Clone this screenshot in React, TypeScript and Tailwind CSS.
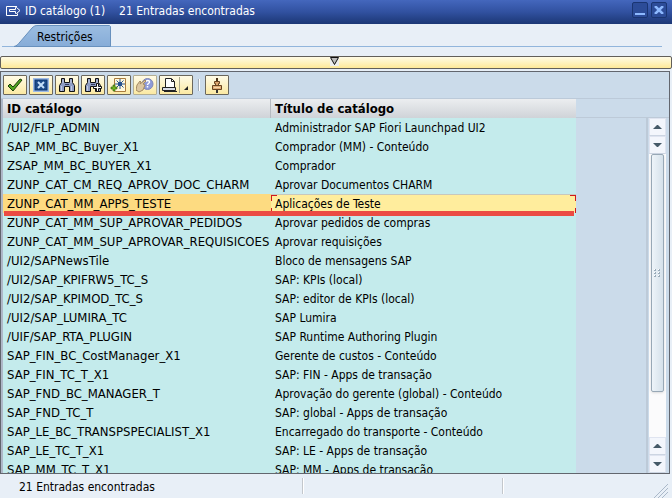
import React from "react";

const entries: [string, string][] = [
  ["/UI2/FLP_ADMIN", "Administrador SAP Fiori Launchpad UI2"],
  ["SAP_MM_BC_Buyer_X1", "Comprador (MM) - Conteúdo"],
  ["ZSAP_MM_BC_BUYER_X1", "Comprador"],
  ["ZUNP_CAT_CM_REQ_APROV_DOC_CHARM", "Aprovar Documentos CHARM"],
  ["ZUNP_CAT_MM_APPS_TESTE", "Aplicações de Teste"],
  ["ZUNP_CAT_MM_SUP_APROVAR_PEDIDOS", "Aprovar pedidos de compras"],
  ["ZUNP_CAT_MM_SUP_APROVAR_REQUISICOES", "Aprovar requisições"],
  ["/UI2/SAPNewsTile", "Bloco de mensagens SAP"],
  ["/UI2/SAP_KPIFRW5_TC_S", "SAP: KPIs (local)"],
  ["/UI2/SAP_KPIMOD_TC_S", "SAP: editor de KPIs (local)"],
  ["/UI2/SAP_LUMIRA_TC", "SAP Lumira"],
  ["/UIF/SAP_RTA_PLUGIN", "SAP Runtime Authoring Plugin"],
  ["SAP_FIN_BC_CostManager_X1", "Gerente de custos - Conteúdo"],
  ["SAP_FIN_TC_T_X1", "SAP: FIN - Apps de transação"],
  ["SAP_FND_BC_MANAGER_T", "Aprovação do gerente (global) - Conteúdo"],
  ["SAP_FND_TC_T", "SAP: global - Apps de transação"],
  ["SAP_LE_BC_TRANSPSPECIALIST_X1", "Encarregado do transporte - Conteúdo"],
  ["SAP_LE_TC_T_X1", "SAP: LE - Apps de transação"],
  ["SAP_MM_TC_T_X1", "SAP: MM - Apps de transação"],
];

const selectedId = "ZUNP_CAT_MM_APPS_TESTE";

function Icon({ children, width = 18 }: { children: React.ReactNode; width?: number }) {
  return (
    <svg width={width} height="16" viewBox={`0 0 ${width} 16`} fill="none" aria-hidden="true" className="shrink-0">
      {children}
    </svg>
  );
}

function ToolButton({ label, children, disabled = false }: { label: string; children: React.ReactNode; disabled?: boolean }) {
  return (
    <button
      type="button"
      aria-label={label}
      disabled={disabled}
      className="flex h-5 w-6 shrink-0 items-center justify-center rounded-[1px] border border-[#6b675c] bg-linear-to-b from-[#fffbe6] to-[#fbe9a2] disabled:border-[#b3ae94]"
    >
      {children}
    </button>
  );
}

function Binoculars() {
  return (
    <>
      <path d="M3.500 1.500h3v4h5v-4h3v4l2 3v6h-5v-5h-5v5h-5v-6l2-3z" fill="#8e9cc4" stroke="#111" />
      <path d="M3.500 9v5M13.500 9v5M5 3v3M13 3v3" stroke="#c3cbe4" />
      <path d="M7 7.500h4" stroke="#343d60" />
    </>
  );
}

function ScrollButton({ label, down = false }: { label: string; down?: boolean }) {
  return (
    <button type="button" aria-label={label} className="flex h-[18px] w-[17px] shrink-0 items-center justify-center border border-[#dfe4f0] border-b-[#ccd5e2] bg-[#f3f6fc]">
      <svg width="9" height="6" viewBox="0 0 9 6" aria-hidden="true">
        {down ? <path d="M0 1h9L5 5H4z" fill="#455a68" /> : <path d="M0 5h9L5 1H4z" fill="#455a68" />}
      </svg>
    </button>
  );
}

function TitleBar() {
  return (
    <header className="flex h-6 shrink-0 items-center bg-linear-to-b from-[#4467bd] via-[#3151a0] to-[#1c3775] pl-[6px] pr-[5px] text-white">
      <svg width="15" height="12" viewBox="0 0 15 12" fill="none" stroke="#fff" aria-hidden="true" className="mr-[4px] mb-[3px] shrink-0">
        <path d="M11 1.500H.5v9h11V8.500M3.500 4.500h6V2.500h1l3.500 3-3.500 3h-1v-2h-6z" />
      </svg>
      <h1 className="flex grow gap-[14px] whitespace-nowrap pb-[3px]">
        <span>ID catálogo (1)</span>
        <span>21 Entradas encontradas</span>
      </h1>
      <div className="flex gap-[3px] pb-1">
        <button type="button" aria-label="Minimizar" className="flex size-4 items-end justify-center rounded-xs border border-[#1a3572] bg-[#2c4c98] pb-[2px]">
          <span className="h-[2px] w-[10px] bg-[#8db9ff]" />
        </button>
        <button type="button" aria-label="Fechar" className="flex size-4 items-center justify-center rounded-xs border border-[#1a3572] bg-[#2c4c98]">
          <svg width="10" height="8" viewBox="0 0 10 8" fill="none" stroke="#8db9ff" strokeWidth="2.500" aria-hidden="true">
            <path d="M1 0l8 8M9 0L1 8" />
          </svg>
        </button>
      </div>
    </header>
  );
}

function Toolbar() {
  return (
    <div role="toolbar" aria-label="Ferramentas" className="flex h-[27px] shrink-0 items-center gap-[2px] border-b border-[#bccad9] pl-[2px]">
      <ToolButton label="Confirmar">
        <Icon><path d="M2 9l2-2 3 3 7-8 2 1-9 11z" fill="#52a51d" stroke="#193b08" /></Icon>
      </ToolButton>
      <ToolButton label="Cancelar">
        <Icon>
          <rect x="1" y="1" width="16" height="14" fill="#9ebbe6" />
          <rect x="3" y="3" width="12" height="10" fill="#1e4b88" stroke="#0b3570" />
          <path d="M6 5l6 6M12 5l-6 6" stroke="#c5dffa" strokeWidth="2" />
        </Icon>
      </ToolButton>
      <ToolButton label="Procurar">
        <Icon><Binoculars /></Icon>
      </ToolButton>
      <ToolButton label="Continuar procura">
        <Icon>
          <Binoculars />
          <path d="M12.500 6.500h2v3h3v2h-3v3h-2v-3h-3v-2h3z" fill="#fff" stroke="#111" />
        </Icon>
      </ToolButton>
      <ToolButton label="Nova seleção">
        <Icon>
          <path d="M4.500 1.500h11v13h-11z" fill="#fff8dc" stroke="#a97b3d" />
          <path d="M10 2v10M5 7h10M6.500 3.500l7 7M13.500 3.500l-7 7" stroke="#27528e" />
          <path d="M8 5h4v4H8z" fill="#24508f" />
          <path d="M3 8h2v2h2v2H5v2H3v-2H1v-2h2z" fill="#71b51d" stroke="#285709" strokeWidth=".6" />
        </Icon>
      </ToolButton>
      <ToolButton label="Ajuda" disabled>
        <Icon>
          <circle cx="11.500" cy="7" r="5.500" fill="#8e9bd8" stroke="#8088b8" />
          <path d="M9.500 5c1-2 4-2 4 0 0 1.500-2 1.500-2 3M11.500 9v1.500" stroke="#fff" strokeWidth="1.500" />
          <path d="M1 8l3-4 1 1-1 2 5-4 1 1-3 3 2 1-2 5-4 2-3-2z" fill="#dcc7a0" stroke="#a58b63" />
        </Icon>
      </ToolButton>
      <button type="button" aria-label="Imprimir" className="flex h-5 w-[34px] shrink-0 items-center rounded-[1px] border border-[#6b675c] bg-linear-to-b from-[#fffbe6] to-[#fbe9a2]">
        <Icon width={32}>
          <path d="M5.500 1.500h6l3 3v6h-9z" fill="#fff" stroke="#222" />
          <path d="M11.500 2v2.500h3" stroke="#222" />
          <path d="M2.500 10.500h13v3h-13z" fill="#d9dce5" stroke="#222" />
          <path d="M4 14.500h13" stroke="#222" />
          <path d="M19.500 0v16" stroke="#a9a68d" />
          <path d="M28 9v4h-4z" fill="#222" />
        </Icon>
      </button>
      <span className="mx-[3px] h-3 w-[2px] border-l border-[#a0aab5] bg-white" />
      <ToolButton label="Fixar">
        <Icon>
          <path d="M9 1v5" stroke="#4a3218" strokeWidth="2" />
          <path d="M6.500 4.500h5v2h-1v2h-3v-2h-1z" fill="#dda66e" stroke="#68431f" />
          <path d="M4.500 8.500h9v4h-9z" fill="#e0ad77" stroke="#68431f" />
          <path d="M6 10.500h6" stroke="#f6d6a8" />
          <path d="M9 13v3" stroke="#333" strokeWidth="2" />
        </Icon>
      </ToolButton>
    </div>
  );
}

function SelectionCorners() {
  return (
    <>
      <span className="absolute left-0 top-0 size-[6px] border-l border-t border-[#d0191d]" />
      <span className="absolute bottom-0 left-0 h-[5px] w-px bg-[#d0191d]" />
      <span className="absolute right-0 top-0 size-[6px] border-r border-t border-[#d0191d]" />
      <span className="absolute bottom-0 right-0 h-[5px] w-px bg-[#d0191d]" />
    </>
  );
}

function CatalogTable() {
  return (
    <table className="w-[573px] shrink-0 table-fixed border-separate border-spacing-0 self-start text-left">
      <colgroup>
        <col className="w-[268px]" />
        <col />
      </colgroup>
      <thead>
        <tr className="h-[19px] bg-linear-to-b from-[#eceef0] to-[#cfd3d8]">
          <th scope="col" className="border-r border-[#b6bbc1] py-0 pl-1 text-[13px]">ID catálogo</th>
          <th scope="col" className="py-0 pl-1 text-[13px]">Título de catálogo</th>
        </tr>
      </thead>
      <tbody>
        {entries.map(([id, title]) => {
          const selected = id === selectedId;
          return (
            <tr key={id} aria-selected={selected} className={selected ? "h-[19px] bg-[#fddb81]" : "h-[19px] bg-[#c4ebec]"}>
              <td className="whitespace-nowrap py-0 pl-1 text-[13px]">{id}</td>
              <td className={selected ? "relative whitespace-nowrap border-t border-[#c8c8bd] bg-[#ffed9d] py-0 pl-1" : "whitespace-nowrap py-0 pl-1"}>
                {title}
                {selected && <SelectionCorners />}
                {selected && <span className="absolute -bottom-[3px] -left-[267px] right-[2px] h-[5px] bg-[#eb4b43]" />}
              </td>
            </tr>
          );
        })}
      </tbody>
    </table>
  );
}

function ScrollBar() {
  return (
    <div className="mt-[18px] flex grow justify-end border-t border-[#bdcad8]">
      <div className="flex w-[23px] flex-col items-center border-l-2 border-[#bdcad8] pr-[3px]">
        <ScrollButton label="Rolar para cima" />
        <ScrollButton label="Rolar para baixo" down />
        <div className="flex w-[17px] grow flex-col bg-[#fbfbfc] px-[2px]">
          <div className="flex h-[84%] items-center justify-center rounded-xs border border-[#98a8b6] bg-linear-to-r from-[#eef4f9] to-[#d5e1ea] shadow-sm">
            <div className="grid grid-cols-2 gap-x-[2px] gap-y-px">
              {[0, 1, 2, 3, 4, 5].map((dot) => (
                <span key={dot} className="size-[2px] border-b border-r border-[#9aacba] bg-white" />
              ))}
            </div>
          </div>
        </div>
        <ScrollButton label="Linha anterior" />
        <ScrollButton label="Próxima linha" down />
      </div>
    </div>
  );
}

export default function App() {
  return (
    <div className="flex h-screen flex-col overflow-hidden bg-[#e8eff7] font-['DejaVu_Sans_Condensed','DejaVu_Sans',sans-serif] text-[12px] leading-[18px] text-black">
      <TitleBar />
      <div role="tablist" className="ml-[2px] mr-[10px] flex h-[23px] shrink-0 items-end border-b border-[#91b5dc] pl-3">
        <button type="button" role="tab" aria-selected="true" className="relative h-[21px] w-[97px] pl-[23px] pt-[2px] text-left">
          <svg width="97" height="22" viewBox="0 0 97 22" aria-hidden="true" className="absolute left-0 top-0">
            <defs>
              <linearGradient id="tab" x2="0" y2="1">
                <stop stopColor="#9bbde1" />
                <stop offset="1" stopColor="#86acd8" />
              </linearGradient>
            </defs>
            <path d="M0 21.500C3 21 4 19 6 17L18 3C20 1 21 .5 24 .5h71.500l1 1v20z" fill="url(#tab)" stroke="#6790bd" />
          </svg>
          <span className="relative">Restrições</span>
        </button>
      </div>
      <button type="button" aria-label="Expandir restrições" className="mt-[9px] flex h-[13px] shrink-0 items-start justify-center rounded-[2px] border border-[#625f5a] bg-linear-to-b from-[#fffbe4] to-[#ffe997] pr-[3px]">
        <svg width="9" height="9" viewBox="0 0 9 9" aria-hidden="true">
          <path d="M0 0h9v9H0z" fill="#eee" />
          <path d="M.5.5h8l-4 7z" fill="#bbb" stroke="#111" />
        </svg>
      </button>
      <main className="mr-[2px] mt-[2px] flex min-h-0 grow flex-col overflow-hidden border border-[#62666e] bg-[#cbdbea]">
        <Toolbar />
        <div className="flex min-h-0 grow border-l-2 border-[#aeb8c8]">
          <CatalogTable />
          <ScrollBar />
        </div>
      </main>
      <footer className="flex h-6 shrink-0 items-center pl-[19px]">
        <span className="w-[283px] pt-px">21 Entradas encontradas</span>
        <span className="h-4 w-[2px] border-l border-[#c3c7cc] bg-white" />
        <span className="grow" />
        <span className="mr-[149px] h-4 w-[2px] border-l border-[#c3c7cc] bg-white" />
        <svg width="15" height="15" viewBox="0 0 15 15" stroke="#aab8c9" aria-hidden="true" className="mr-1 self-end">
          <path d="M1 15L15 1M5 15L15 5M9 15l6-6" />
        </svg>
      </footer>
    </div>
  );
}
